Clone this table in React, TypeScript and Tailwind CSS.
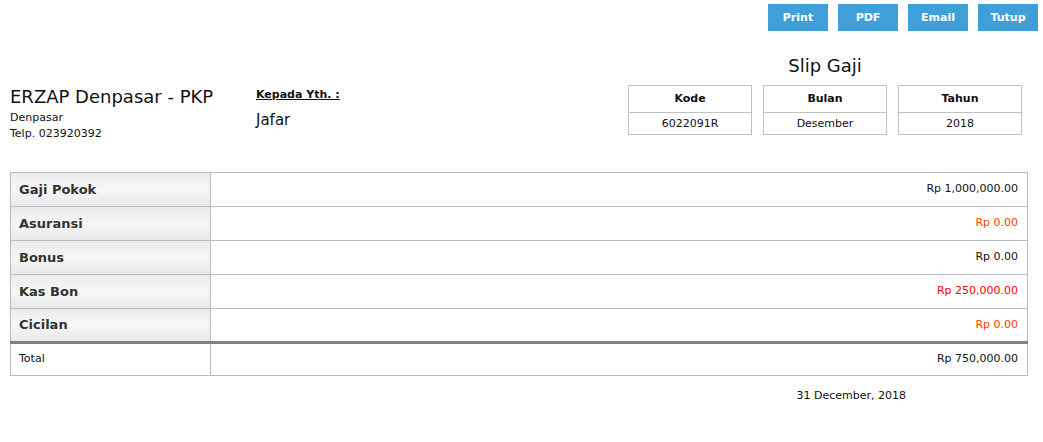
// @ts-nocheck
import React from 'react';

const rows = [
  { label: 'Gaji Pokok', value: 'Rp 1,000,000.00', color: 'text-[#111]' },
  { label: 'Asuransi', value: 'Rp 0.00', color: 'text-[#ff4000]' },
  { label: 'Bonus', value: 'Rp 0.00', color: 'text-[#111]' },
  { label: 'Kas Bon', value: 'Rp 250,000.00', color: 'text-[#ff0000]' },
  { label: 'Cicilan', value: 'Rp 0.00', color: 'text-[#ff4000]' },
];

const info = [
  { head: 'Kode', val: '6022091R' },
  { head: 'Bulan', val: 'Desember' },
  { head: 'Tahun', val: '2018' },
];

export default function App() {
  return (
    <div className="w-[1043px] h-[442px] bg-white text-[#111] font-['DejaVu_Sans',Verdana,sans-serif]">
      <div className="flex justify-end gap-[10px] pt-[4px] pr-[5px]">
        {['Print', 'PDF', 'Email', 'Tutup'].map((b) => (
          <button key={b} className="w-[60px] h-[27px] pt-[2px] bg-[#3f9fd9] text-white text-[11px] font-bold">
            {b}
          </button>
        ))}
      </div>

      <div className="flex justify-end pr-[21px] mt-[24px]">
        <div className="w-[394px] text-center text-[18px] leading-[22px]">Slip Gaji</div>
      </div>

      <div className="flex items-start mt-[8px] px-[10px]">
        <div className="w-[246px] pt-[1px]">
          <div className="text-[18px] leading-[22px]">ERZAP Denpasar - PKP</div>
          <div className="text-[11px] leading-[16px] mt-[2px]">Denpasar</div>
          <div className="text-[11px] leading-[16px]">Telp. 023920392</div>
        </div>
        <div className="pt-[2px]">
          <div className="text-[11px] font-bold underline leading-[16px]">Kepada Yth. :</div>
          <div className="text-[15px] leading-[20px] mt-[7px]">Jafar</div>
        </div>
        <div className="ml-auto mr-[11px] flex items-start gap-[11px]">
          {info.map((i) => (
            <div key={i.head} className="w-[124px] border border-[#c2c2c2] text-center text-[11px]">
              <div className="h-[27px] leading-[25px] font-bold border-b border-[#c2c2c2]">{i.head}</div>
              <div className="h-[21px] leading-[21px]">{i.val}</div>
            </div>
          ))}
        </div>
      </div>

      <table className="mt-[30px] ml-[10px] w-[1018px] border-collapse text-[11px]">
        <tbody>
          {rows.map((r) => (
            <tr key={r.label} className="h-[34px]">
              <td className="w-[200px] border border-[#b4bcc4] pl-[8px] font-bold text-[13px] text-[#333] bg-gradient-to-b from-[#ececec] via-[#f6f6f6] to-[#e8e8e8]">
                {r.label}
              </td>
              <td className={`border border-[#b4bcc4] text-right pr-[9px] ${r.color}`}>{r.value}</td>
            </tr>
          ))}
          <tr className="h-[33px]">
            <td className="border border-[#b4bcc4] border-t-[3px] border-t-[#808080] pl-[8px]">Total</td>
            <td className="border border-[#b4bcc4] border-t-[3px] border-t-[#808080] text-right pr-[9px]">Rp 750,000.00</td>
          </tr>
        </tbody>
      </table>

      <div className="flex justify-end pr-[137px] mt-[12px] text-[11px]">31 December, 2018</div>
    </div>
  );
}
